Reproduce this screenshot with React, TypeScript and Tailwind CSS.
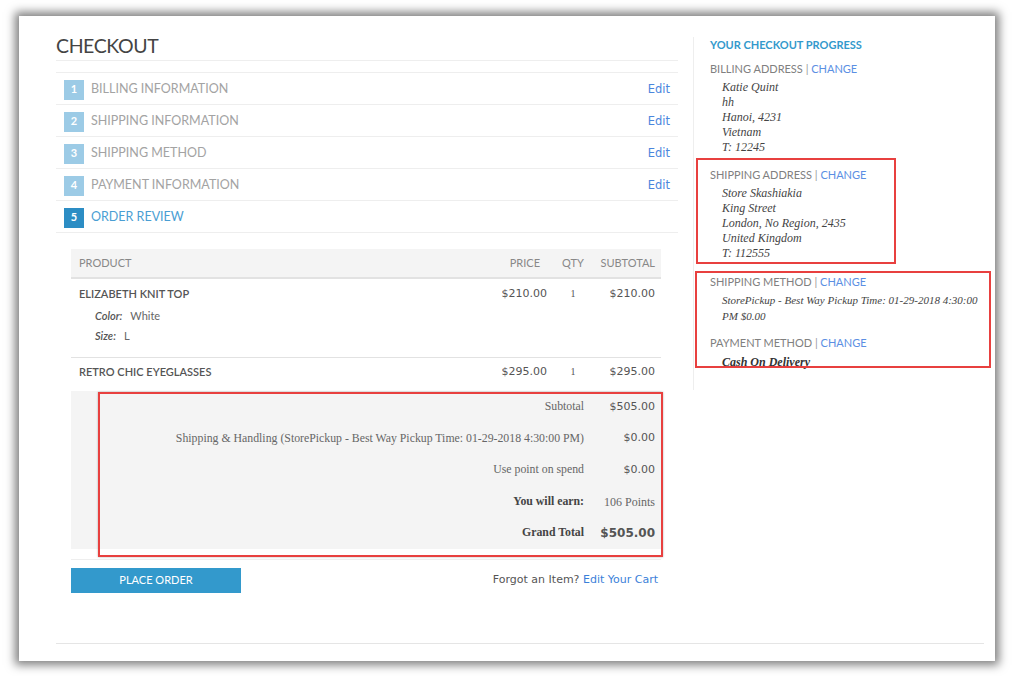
import React from 'react';

const sans = { fontFamily: 'Lato, "Open Sans", sans-serif' };

const steps = [
  { n: 1, label: 'Billing Information' },
  { n: 2, label: 'Shipping Information' },
  { n: 3, label: 'Shipping Method' },
  { n: 4, label: 'Payment Information' },
];

const totals = [
  { label: 'Subtotal', value: '$505.00' },
  { label: 'Shipping & Handling (StorePickup - Best Way Pickup Time: 01-29-2018 4:30:00 PM)', value: '$0.00' },
  { label: 'Use point on spend', value: '$0.00' },
  { label: 'You will earn:', value: '106 Points', bold: true, serifValue: true },
  { label: 'Grand Total', value: '$505.00', bold: true, big: true },
];

const SideHead = ({ title }: { title: string }) => (
  <div className="h-[16px] leading-[16px] text-[11px] uppercase text-[#808080]">
    {title} <span className="text-[#999]">|</span>{' '}
    <span className="text-[#5b8fe3]">Change</span>
  </div>
);

const Address = ({ lines, className = '' }: { lines: string[]; className?: string }) => (
  <div className={`ml-[12px] font-['Liberation_Serif',serif] italic text-[12px] leading-[15px] text-[#444] ${className}`}>
    {lines.map((l) => (
      <div key={l}>{l}</div>
    ))}
  </div>
);

export default function App() {
  return (
    <div className="w-[1014px] h-[676px] bg-white pl-[19px] pt-[16px] overflow-hidden">
      <div
        className="w-[976px] h-[645px] bg-white shadow-[0_0_9px_4px_rgba(0,0,0,0.5)] flex pl-[37px] relative"
        style={sans}
      >
        {/* Left column */}
        <div className="w-[622px] flex flex-col">
          <div className="h-[45px] flex items-end pb-[2px] border-b border-[#eee]">
            <h1 className="text-[19.5px] leading-[24px] text-[#444] tracking-[-0.4px]">CHECKOUT</h1>
          </div>

          <div className="mt-[11px] border-t border-[#eee]">
            {steps.map((s) => (
              <div key={s.n} className="h-[32px] border-b border-[#eee] flex items-center pl-[8px] pr-[8px] pt-[2px]">
                <span className="w-[20px] h-[20px] bg-[#9ccbe6] text-white text-[11px] font-bold flex items-center justify-center">
                  {s.n}
                </span>
                <span className="ml-[7px] text-[12.5px] uppercase text-[#a3a3a3]">{s.label}</span>
                <span className="ml-auto font-['DejaVu_Sans',sans-serif] text-[11.5px] text-[#4b86dd]">Edit</span>
              </div>
            ))}
            <div className="h-[32px] border-b border-[#eee] flex items-center pl-[8px] pt-[2px]">
              <span className="w-[20px] h-[20px] bg-[#2c8dc4] text-white text-[11px] font-bold flex items-center justify-center">
                5
              </span>
              <span className="ml-[7px] text-[12.5px] uppercase text-[#4a9ed3]">Order Review</span>
            </div>
          </div>

          {/* Review table */}
          <div className="ml-[15px] w-[590px] mt-[16px] relative">
            <div className="h-[30px] bg-[#f4f4f4] border-b-2 border-[#e2e2e2] flex items-center text-[11px] uppercase text-[#888]">
              <div className="flex-1 pl-[8px]">Product</div>
              <div className="w-[62px] text-right pr-[8px]">Price</div>
              <div className="w-[50px] text-center">Qty</div>
              <div className="w-[63px] text-right pr-[6px]">Subtotal</div>
            </div>

            <div className="h-[79px] border-b border-[#e2e2e2] flex pt-[7px]">
              <div className="flex-1 pl-[8px]">
                <div className="text-[11px] leading-[16px] uppercase text-[#555] font-semibold">Elizabeth Knit Top</div>
                <div className="ml-[16px] mt-[4px] text-[11px] leading-[20px] text-[#666]">
                  <div>
                    <i className="font-semibold text-[#555]">Color:</i>
                    <span className="ml-[8px]">White</span>
                  </div>
                  <div>
                    <i className="font-semibold text-[#555]">Size:</i>
                    <span className="ml-[8px]">L</span>
                  </div>
                </div>
              </div>
              <div className="w-[62px] text-right pr-[1px] font-['DejaVu_Sans',sans-serif] text-[11px] leading-[16px] text-[#555]">$210.00</div>
              <div className="w-[50px] text-center font-['Liberation_Serif',serif] text-[10px] leading-[16px] text-[#555]">1</div>
              <div className="w-[63px] text-right pr-[6px] font-['DejaVu_Sans',sans-serif] text-[11px] leading-[16px] text-[#555]">$210.00</div>
            </div>

            <div className="h-[33px] flex pt-[6px]">
              <div className="flex-1 pl-[8px] text-[11px] leading-[16px] uppercase text-[#555] font-semibold">Retro Chic Eyeglasses</div>
              <div className="w-[62px] text-right pr-[1px] font-['DejaVu_Sans',sans-serif] text-[11px] leading-[16px] text-[#555]">$295.00</div>
              <div className="w-[50px] text-center font-['Liberation_Serif',serif] text-[10px] leading-[16px] text-[#555]">1</div>
              <div className="w-[63px] text-right pr-[6px] font-['DejaVu_Sans',sans-serif] text-[11px] leading-[16px] text-[#555]">$295.00</div>
            </div>

            <div className="h-[158px] bg-[#f4f4f4] flex flex-col">
              {totals.map((t) => (
                <div key={t.label} className="h-[31.6px] flex items-center">
                  <div
                    className={`flex-1 text-right font-['Liberation_Serif',serif] text-[11.8px] ${t.bold ? 'font-bold text-[#444]' : 'text-[#666]'}`}
                  >
                    {t.label}
                  </div>
                  <div
                    className={`w-[77px] text-right pr-[6px] ${
                      t.serifValue ? "font-['Liberation_Serif',serif] text-[12px] text-[#666]" : "font-['DejaVu_Sans',sans-serif] text-[#555]"
                    } ${t.big ? 'text-[12px] font-bold text-[#444]' : t.serifValue ? '' : 'text-[11px]'}`}
                  >
                    {t.value}
                  </div>
                </div>
              ))}
            </div>
            <div className="h-[11px] border-b border-[#eee]" />

            <div className="mt-[8px] flex items-center">
              <button className="w-[170px] h-[25px] bg-[#3399cc] text-white text-[11px] uppercase">Place Order</button>
              <div className="ml-auto pr-[3px] font-['DejaVu_Sans',sans-serif] text-[11px] text-[#555]">
                Forgot an Item? <span className="text-[#3b7fd9]">Edit Your Cart</span>
              </div>
            </div>

            {/* annotation */}
            <div className="absolute left-[27px] top-[143px] w-[565px] h-[165px] border-2 border-[#e8403f] shadow-[0_0_2px_rgba(0,0,0,0.3)] pointer-events-none" />
          </div>
        </div>

        {/* Right column */}
        <div className="ml-[15px] w-[300px] h-[353px] mt-[21px] border-l border-[#eee] pl-[16px] relative overflow-hidden">
          <div className="h-[16px] leading-[16px] text-[11px] font-bold uppercase text-[#3399cc]">Your Checkout Progress</div>

          <div className="mt-[8px]">
            <SideHead title="Billing Address" />
            <Address className="mt-[3px]" lines={['Katie Quint', 'hh', 'Hanoi, 4231', 'Vietnam', 'T: 12245']} />
          </div>

          <div className="mt-[12px]">
            <SideHead title="Shipping Address" />
            <Address
              className="mt-[3px]"
              lines={['Store Skashiakia', 'King Street', 'London, No Region, 2435', 'United Kingdom', 'T: 112555']}
            />
          </div>

          <div className="mt-[13px]">
            <SideHead title="Shipping Method" />
            <div className="ml-[12px] mr-[8px] mt-[2px] font-['Liberation_Serif',serif] italic text-[11px] leading-[16px] text-[#444]">
              StorePickup - Best Way Pickup Time: 01-29-2018 4:30:00 PM $0.00
            </div>
          </div>

          <div className="mt-[11px]">
            <SideHead title="Payment Method" />
            <div className="ml-[12px] mt-[3px] font-['Liberation_Serif',serif] italic font-bold text-[12px] leading-[16px] text-[#333]">
              Cash On Delivery
            </div>
          </div>

          {/* annotations */}
          <div className="absolute left-[2px] top-[121px] w-[200px] h-[106px] border-2 border-[#e8403f] pointer-events-none" />
          <div className="absolute left-[1px] top-[234px] w-[296px] h-[97px] border-2 border-[#e8403f] pointer-events-none" />
        </div>

        <div className="absolute left-[37px] right-[11px] bottom-[17px] border-b border-[#e5e5e5]" />
      </div>
    </div>
  );
}
